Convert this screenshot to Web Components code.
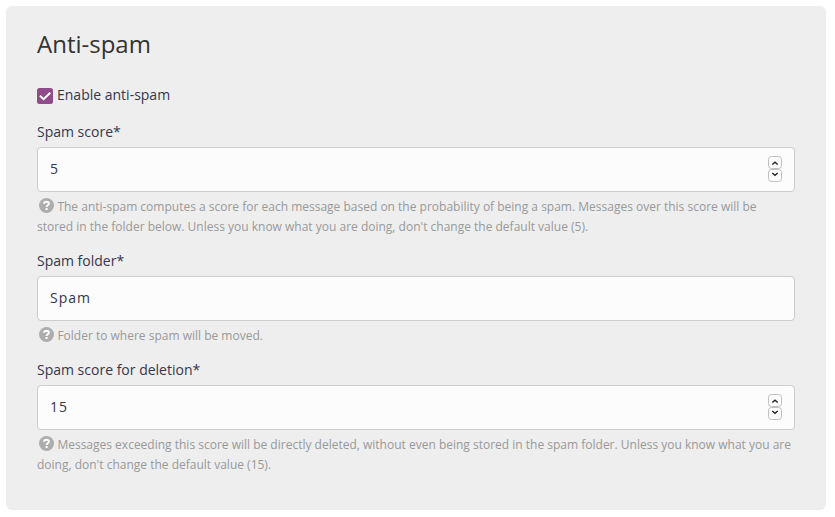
<!DOCTYPE html>
<html lang="en">
<head>
<meta charset="utf-8">
<title>Anti-spam</title>
<style>
html { background: #fff; }
body { margin: 0; padding: 6px 9px 7px 6px; font-family: "Open Sans", "Noto Sans", sans-serif; font-size: 14px; line-height: 20px; color: #36364c; }
</style>
</head>
<body>
<settings-panel heading="Anti-spam">
  <check-field>Enable anti-spam</check-field>
  <form-field label="Spam score*" value="5" numeric>The anti-spam computes a score for each message based on the probability of being a spam. Messages over this score will be stored in the folder below. Unless you know what you are doing, don't change the default value (5).</form-field>
  <form-field label="Spam folder*" value="Spam">Folder to where spam will be moved.</form-field>
  <form-field label="Spam score for deletion*" value="15" numeric>Messages exceeding this score will be directly deleted, without even being stored in the spam folder. Unless you know what you are doing, don't change the default value (15).</form-field>
</settings-panel>
<script>
class SettingsPanel extends HTMLElement {
  connectedCallback() {
    const root = this.attachShadow({ mode: 'open' });
    root.innerHTML = `<style>
      :host { display: block; box-sizing: border-box; height: 504px; padding: 22px 31px 0; background: #eee; border-radius: 6px; }
      h2 { margin: 0 0 25px; font-size: 24px; line-height: 32px; font-weight: 400; color: #333; }
      .fields { display: flex; flex-direction: column; gap: 14px; }
    </style><h2></h2><div class="fields"><slot></slot></div>`;
    root.querySelector('h2').textContent = this.getAttribute('heading');
  }
}
class CheckField extends HTMLElement {
  connectedCallback() {
    this.attachShadow({ mode: 'open' }).innerHTML = `<style>
      :host { display: flex; gap: 4px; height: 20px; margin-bottom: 3px; }
      svg { display: block; width: 16px; height: 16px; margin-top: 3px; }
    </style>
    <svg viewBox="0 0 16 16"><rect width="16" height="16" rx="2.5" fill="#8f4c88"/><path d="M2.9 7.8l3.7 3.4 6.7-6.5" fill="none" stroke="#fff" stroke-width="1.9"/></svg>
    <span><slot></slot></span>`;
  }
}
class NumberStepper extends HTMLElement {
  connectedCallback() {
    this.attachShadow({ mode: 'open' }).innerHTML = `<style>
      :host { display: block; width: 14px; height: 26px; }
      svg { display: block; }
    </style>
    <svg width="14" height="26" viewBox="0 0 14 26" fill="none">
      <g fill="#fcfcfc" stroke="#bfbfbf"><rect x=".5" y=".5" width="13" height="12" rx="3"/><rect x=".5" y="13.5" width="13" height="12" rx="3"/></g>
      <path d="M4.3 8.5L7 6.2l2.7 2.3M4.3 17L7 19.3l2.7-2.3" stroke="#222" stroke-width="1.4"/>
    </svg>`;
  }
}
class HelpText extends HTMLElement {
  connectedCallback() {
    this.attachShadow({ mode: 'open' }).innerHTML = `<style>
      :host { display: block; font-size: 12px; line-height: 20px; color: #999; }
      svg { width: 15px; height: 15px; margin: 0 3.4px 0 2px; vertical-align: -2px; }
    </style><svg viewBox="0 0 15 15"><circle cx="7.5" cy="7.5" r="7.5" fill="#adadad"/><path d="M5 5.8C5.1 4.4 6 3.8 7.4 3.8c1.5 0 2.5.7 2.5 1.9 0 1.6-2.3 1.6-2.3 3.2" fill="none" stroke="#fff" stroke-width="1.9"/><rect x="6.6" y="10" width="2" height="2" fill="#fff"/></svg><slot></slot>`;
  }
}
class FormField extends HTMLElement {
  connectedCallback() {
    const root = this.attachShadow({ mode: 'open' });
    root.innerHTML = `<style>
      :host { display: block; }
      .label { margin-bottom: 5px; }
      .box { display: flex; align-items: center; justify-content: space-between; box-sizing: border-box; height: 45px; padding: 0 12px; background: #fcfcfc; border: 1px solid #ccc; border-radius: 4px; letter-spacing: 1px; }
      number-stepper { margin-top: -2px; }
      .value { margin-top: -2px; }
      help-text { margin-top: 5px; }
    </style>
    <div class="label"></div>
    <div class="box"><span class="value"></span></div>
    <help-text><slot></slot></help-text>`;
    root.querySelector('.label').textContent = this.getAttribute('label');
    root.querySelector('.value').textContent = this.getAttribute('value');
    if (this.hasAttribute('numeric')) root.querySelector('.box').append(document.createElement('number-stepper'));
  }
}
customElements.define('settings-panel', SettingsPanel);
customElements.define('check-field', CheckField);
customElements.define('number-stepper', NumberStepper);
customElements.define('help-text', HelpText);
customElements.define('form-field', FormField);
</script>
</body>
</html>
